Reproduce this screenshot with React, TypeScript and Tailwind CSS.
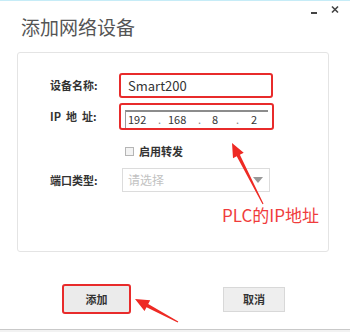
import React from 'react';

const cjk = { fontFamily: '"Noto Sans CJK SC", "Noto Sans", sans-serif' };

// red annotation arrow, drawn from tail to tip
function Arrow({ tail, tip }: { tail: [number, number]; tip: [number, number] }) {
  const dx = tip[0] - tail[0];
  const dy = tip[1] - tail[1];
  const len = Math.hypot(dx, dy);
  const ux = dx / len;
  const uy = dy / len;
  const nx = -uy;
  const ny = ux;
  const headLen = 14;
  const headW = 6;
  const bx = tip[0] - ux * headLen;
  const by = tip[1] - uy * headLen;
  const p = (x: number, y: number) => `${x.toFixed(1)},${y.toFixed(1)}`;
  const pts = [
    p(tail[0] + nx * 0.6, tail[1] + ny * 0.6),
    p(bx + nx * 1.8, by + ny * 1.8),
    p(bx + nx * headW, by + ny * headW),
    p(tip[0], tip[1]),
    p(bx - nx * headW, by - ny * headW),
    p(bx - nx * 1.8, by - ny * 1.8),
    p(tail[0] - nx * 0.6, tail[1] - ny * 0.6),
  ].join(' ');
  return <polygon points={pts} fill="#ee2a24" />;
}

export default function App() {
  return (
    <div className="relative flex h-[332px] w-[350px] flex-col overflow-hidden border-t border-[#c6ecf7] bg-white">
      <div className="absolute right-[11px] top-[4px]">
        <svg width="28" height="10" viewBox="0 0 28 10">
          <rect x="0" y="7" width="6" height="2" fill="#444" />
          <path d="M21 1.5L27 7.5M27 1.5L21 7.5" stroke="#444" strokeWidth="1.6" />
        </svg>
      </div>

      <div className="pl-[21px] pt-[13px] text-[19px] leading-[26px] text-[#555]" style={cjk}>
        添加网络设备
      </div>

      <div className="ml-[17px] mr-[21px] mt-[12px] flex h-[200px] flex-col rounded-[3px] border border-[#e4e4e4]">
        <div className="mt-[20px] flex h-[25px] items-center pl-[32px]">
          <span className="w-[69px] text-[11px] font-bold text-[#333]" style={cjk}>设备名称:</span>
          <div className="flex h-[25px] w-[154px] items-center rounded-[3px] border-2 border-[#e82b2b] pl-[7px] text-[13px] text-[#333]" style={cjk}>
            Smart200
          </div>
        </div>

        <div className="mt-[5px] flex h-[27px] items-center pl-[32px]">
          <span className="w-[69px] text-[11px] font-bold text-[#333]" style={cjk}>IP&nbsp;&nbsp;地&nbsp;&nbsp;址:</span>
          <div className="flex h-[27px] w-[155px] items-center rounded-[3px] border-2 border-[#e82b2b] pl-[4px] pt-[4px]">
            <div className="flex h-[18px] w-[143px] items-center border-l border-t-2 border-l-[#9a9a9a] border-t-[#8c8c8c] text-[11px] text-[#333]" style={cjk}>
              <span className="w-[32px] pl-[2px]">192</span>
              <span className="w-[10px] text-[#888]">.</span>
              <span className="w-[30px]">168</span>
              <span className="w-[14px] text-[#888]">.</span>
              <span className="w-[24px]">8</span>
              <span className="w-[15px] text-[#888]">.</span>
              <span>2</span>
            </div>
          </div>
        </div>

        <div className="mt-[15px] flex h-[12px] items-center gap-[5px] pl-[107px]">
          <span className="h-[9px] w-[9px] border border-[#b5b5b5] bg-[#f3f3f3]" />
          <span className="text-[11px] font-bold text-[#333]" style={cjk}>启用转发</span>
        </div>

        <div className="mt-[11px] flex h-[24px] items-center pl-[32px]">
          <span className="w-[72px] text-[11px] font-bold text-[#333]" style={cjk}>端口类型:</span>
          <div className="flex h-[24px] w-[148px] items-center justify-between border border-[#dcdcdc] pl-[5px] pr-[6px]">
            <span className="text-[12px] text-[#c2c2c2]" style={cjk}>请选择</span>
            <svg width="10" height="6" viewBox="0 0 10 6">
              <polygon points="0,0 10,0 5,6" fill="#999" />
            </svg>
          </div>
        </div>
      </div>

      <div className="mt-[32px] flex items-start pl-[62px]">
        <div className="flex h-[30px] w-[69px] items-center justify-center rounded-[3px] border-2 border-[#e82b2b] bg-[#ebebeb]">
          <span className="text-[11px] font-bold text-[#333]" style={cjk}>添加</span>
        </div>
        <div className="ml-[92px] mt-[3px] flex h-[25px] w-[62px] items-center justify-center border border-[#d8d8d8] bg-[#eeeeee]">
          <span className="text-[11px] font-bold text-[#333]" style={cjk}>取消</span>
        </div>
      </div>

      <div className="mt-auto h-[3px] border-t border-[#c9c9c9] bg-[#f2f2f2]" />

      <svg className="pointer-events-none absolute left-0 top-0" width="350" height="332">
        <Arrow tail={[263, 203]} tip={[232, 142]} />
        <Arrow tail={[178, 321]} tip={[135, 298]} />
      </svg>
      <div className="absolute left-[222px] top-[203px] text-[17px] leading-[22px] text-[#f03c3c]" style={cjk}>
        PLC的IP地址
      </div>
    </div>
  );
}
